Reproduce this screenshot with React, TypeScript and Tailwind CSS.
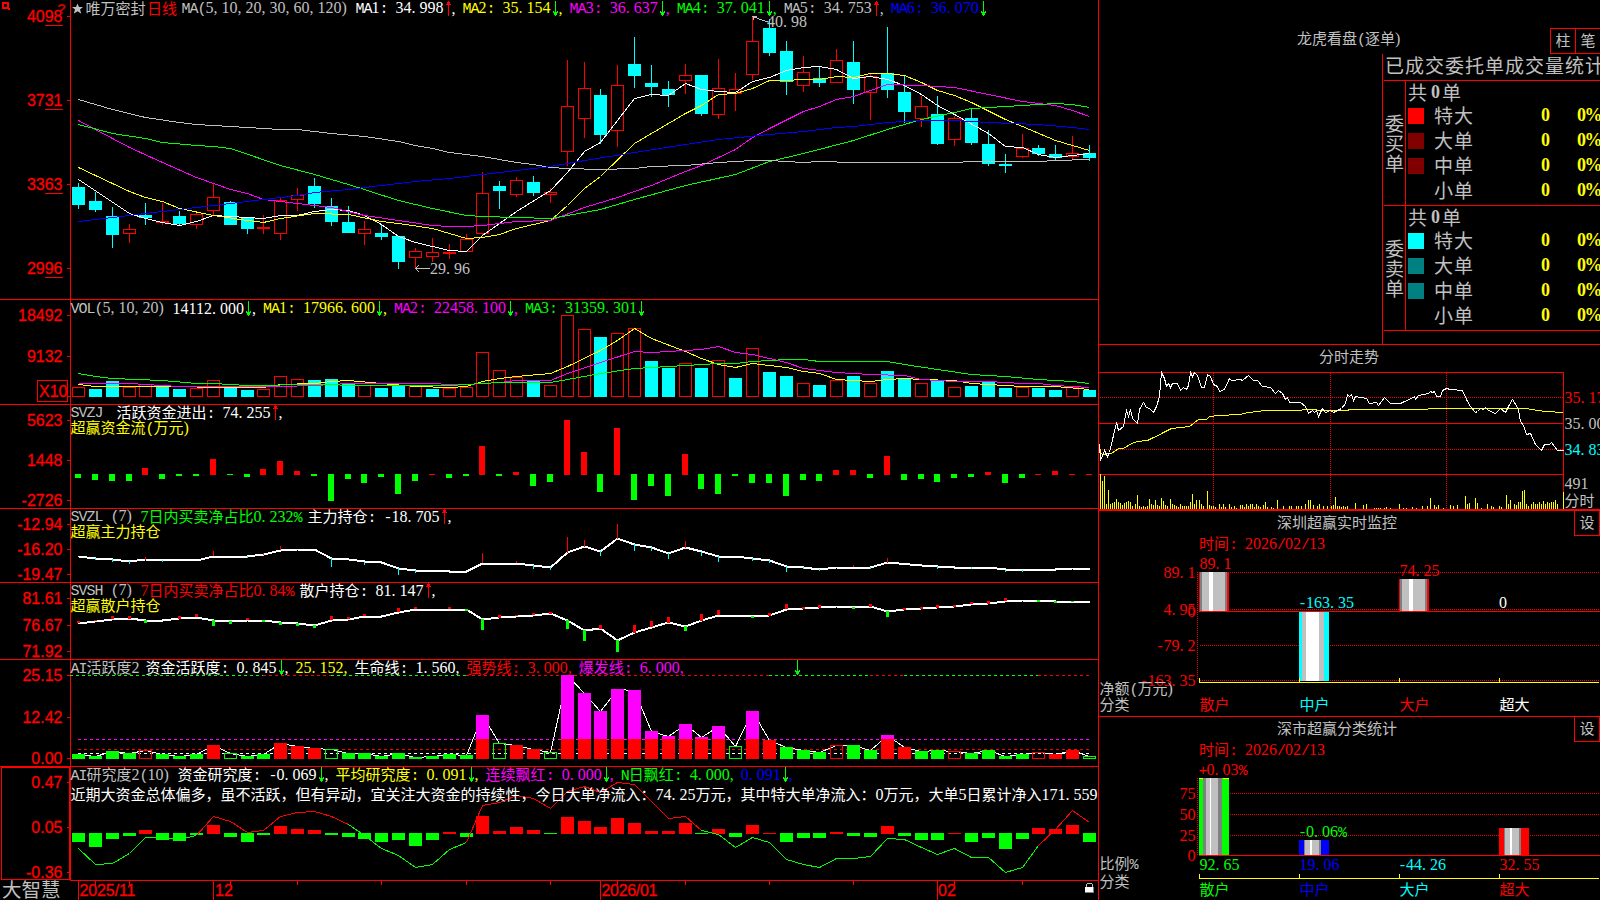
import React from 'react';
import clsx from 'clsx';

const cx = (i: number) => Math.round(78 + 16.85 * i);

/* ---------- text ---------- */

const runsOf = (s: string) => s.match(/[\u2e80-\uffff]+|[0-9]+|[,.]|\)|[^\u2e80-\uffff0-9,.)]+/g) ?? [];
const runClass = (r: string) => {
  if (/[\u2e80-\uffff]/.test(r)) return "font-['Noto_Sans_CJK_SC',sans-serif] text-[15px]";
  if (/[0-9]/.test(r)) return "font-['Liberation_Serif',serif] text-[16px]";
  if (/[,.]/.test(r)) return "font-['Liberation_Serif',serif] text-[16px] tracking-[4px]";
  if (r === ')') return "font-['Liberation_Serif',serif] text-[16px] tracking-[2.67px]";
  return "font-['Liberation_Mono',monospace] text-[15px] tracking-[-1px]";
};

function Txt({ children, className }: { children: string; className?: string }) {
  return (
    <span className={clsx('whitespace-pre', className)}>
      {runsOf(children).map((r, k) => (
        <span key={k} className={runClass(r)}>{r}</span>
      ))}
    </span>
  );
}

/* Chart label; y is the vertical centre of the digits. */
function Label({ x, y, fill, end, children }: { x: number; y: number; fill: string; end?: boolean; children: string }) {
  return (
    <text x={x} y={y + 5} fill={fill} textAnchor={end ? 'end' : 'start'}>
      {runsOf(children).map((r, k) => (
        <tspan key={k} className={runClass(r)}>{r}</tspan>
      ))}
    </text>
  );
}

function Arrow({ up }: { up?: boolean }) {
  return (
    <svg width="8" height="15" viewBox="0 0 8 15" shapeRendering="crispEdges" className="shrink-0">
      {up ? (
        <path d="M4 0h1v15h-1zM3 2h3v1h-3zM2 3h5v1h-5zM3 1h3v1h-3z" fill="#f00" />
      ) : (
        <path d="M4 0h1v15h-1zM2 10h1v1h-1zM6 10h1v1h-1zM2 11h5v1h-5zM3 12h3v2h-3z" fill="#0f0" />
      )}
    </svg>
  );
}

function Item({ t, c, a }: { t: string; c: string; a?: 'up' | 'down' }) {
  return (
    <div className={clsx('flex items-center', c)}>
      <Txt>{t}</Txt>
      {a && <Arrow up={a === 'up'} />}
      <Txt>,</Txt>
    </div>
  );
}

/* ---------- data (pixel rows) ---------- */

type Candle = [number, number, number, number, 0 | 1];
const candles: Candle[] = [
  [183, 187, 205, 209, 0], [192, 201, 210, 212, 0], [207, 216, 235, 248, 0], [224, 229, 234, 243, 1],
  [203, 215, 218, 225, 0], [203, 221, 223, 225, 1], [211, 216, 224, 226, 0], [212, 214, 225, 229, 1],
  [183, 197, 211, 216, 1], [201, 202, 225, 225, 0], [217, 217, 229, 234, 0], [215, 227, 229, 234, 1],
  [198, 200, 234, 240, 1], [188, 195, 200, 211, 1], [178, 186, 204, 208, 0], [198, 206, 222, 226, 0],
  [206, 222, 233, 233, 0], [221, 229, 234, 245, 1], [224, 233, 237, 240, 0], [236, 236, 262, 269, 0],
  [248, 251, 258, 268, 1], [238, 252, 257, 262, 1], [244, 252, 253, 259, 1], [234, 239, 252, 252, 1],
  [172, 193, 234, 236, 1], [181, 186, 191, 209, 0], [177, 180, 195, 197, 1], [176, 182, 193, 196, 0],
  [188, 192, 195, 203, 1], [60, 106, 152, 166, 1], [62, 88, 119, 138, 1], [89, 95, 135, 144, 0],
  [65, 85, 131, 147, 1], [37, 64, 76, 88, 0], [65, 83, 87, 97, 0], [81, 89, 95, 107, 0],
  [64, 75, 81, 94, 1], [75, 75, 114, 116, 0], [59, 88, 115, 119, 1], [73, 89, 94, 111, 1],
  [16, 41, 75, 80, 1], [19, 28, 53, 56, 0], [41, 51, 82, 95, 0], [56, 72, 86, 92, 1],
  [67, 78, 83, 87, 0], [49, 60, 83, 83, 1], [41, 62, 90, 104, 0], [73, 76, 93, 120, 1],
  [27, 73, 90, 98, 0], [75, 92, 112, 123, 0], [96, 106, 119, 127, 1], [96, 114, 144, 145, 0],
  [116, 118, 140, 146, 1], [108, 118, 143, 145, 0], [130, 144, 164, 166, 0], [154, 164, 166, 173, 0],
  [134, 148, 157, 158, 1], [145, 148, 154, 156, 0], [145, 154, 158, 160, 0], [136, 153, 157, 160, 1],
  [145, 153, 158, 161, 0],
];

/* "index:value" series, values in thirds of a pixel below the base row. */
type Pt = [number, number];
const series = (s: string): Pt[] => s.split(' ').map((p) => p.split(':').map(Number) as Pt);
const fill = (pts: Pt[]): number[] => {
  const out: number[] = [];
  for (let k = 0; k < pts.length - 1; k++) {
    const [a, va] = pts[k];
    const [b, vb] = pts[k + 1];
    for (let i = a; i < b; i++) out[i] = va + ((vb - va) * (i - a)) / (b - a);
  }
  const last = pts[pts.length - 1];
  out[last[0]] = last[1];
  return out;
};

const maGray = series('0:298 2:328 4:353 6:367 7:373 9:379 12:388 13:389 15:400 17:409 19:424 20:436 21:445 22:457 24:469 26:487 27:494 28:502 29:506 31:507 33:505 34:499 36:497 38:488 40:482 41:482 43:486 44:484 46:487 52:487 53:485 57:484 58:482 60:478');
const maMagenta = series('0:361 1:387 2:416 3:442 5:487 7:532 9:568 10:579 11:598 13:610 15:622 17:646 19:661 21:676 22:680 23:680 24:676 26:664 28:660 30:622 32:592 34:556 36:514 37:495 39:448 40:412 41:386 43:335 44:318 45:298 46:288 47:270 48:254 50:256 52:262 54:283 56:303 58:317 59:331 60:348');
const maGreen = series('0:373 2:400 4:415 5:427 7:435 8:439 9:446 12:496 14:523 16:553 19:600 21:625 23:646 24:649 28:655 29:646 31:628 33:598 36:557 39:523 41:484 43:460 46:420 48:388 50:358 52:337 53:326 55:319 58:310 59:313 60:322');
const maYellow = series('0:502 2:550 3:574 4:592 5:604 6:625 8:646 10:661 11:667 12:655 14:640 16:643 18:664 19:671 21:686 23:715 24:712 25:704 26:686 28:661 29:616 30:566 31:530 33:430 36:340 37:315 38:284 39:279 40:265 41:241 44:238 45:228 46:232 47:220 48:220 49:227 50:248 51:272 52:287 53:307 55:358 56:379 58:421 60:452');
const maWhite = series('0:538 3:640 4:656 5:668 6:676 7:665 8:646 9:649 11:655 12:647 13:646 14:634 15:628 16:631 17:646 18:673 19:709 20:727 22:750 23:754 24:706 26:634 28:570 29:517 30:455 31:428 33:295 34:283 35:286 36:250 37:268 38:274 39:277 40:245 41:232 42:211 43:203 44:199 45:208 46:234 47:230 48:238 49:256 50:284 51:316 52:342 54:400 55:438 56:443 57:462 58:471 59:466 60:460');
const maBlue = series('0:664 2:652 4:640 7:622 9:610 11:598 13:586 14:577 16:569 18:556 20:545 22:535 24:523 26:512 28:498 30:482 33:457 36:433 38:418 41:403 43:394 45:383 46:379 48:368 50:362 52:360 54:367 57:373 59:382 60:388');

const volumes = 'R273 C279 C255 R274 R264 C270 C279 R276 R252 C272 C282 R279 R240 R250 C252 C249 C264 R268 C276 C268 R270 C279 R275 R274 R168 R222 R243 C256 R267 R57 R99 C123 R111 R96 C195 C216 R201 C216 R192 C246 R156 C228 C240 R261 C267 R252 C240 R261 C225 C248 R261 C255 R273 C270 C256 C276 R272 C276 C282 R272 C282'.split(' ');
const volYellow = series('0:264 1:270 4:270 6:271 8:274 9:273 11:273 12:266 14:262 15:256 16:253 18:262 20:270 22:274 23:270 24:256 25:246 26:240 28:232 29:210 31:163 32:132 33:97 34:127 36:166 37:186 38:205 39:214 40:202 42:214 43:226 44:232 45:250 47:256 48:250 49:247 50:250 52:254 53:261 56:271 58:272 60:280');
const volMagenta = series('0:262 3:263 5:269 6:271 12:271 14:268 16:262 20:263 23:266 25:258 26:254 28:253 29:232 31:199 33:166 34:169 37:160 38:151 39:169 40:175 42:198 43:216 45:228 47:235 49:238 50:250 52:256 54:257 56:263 57:262 58:268 60:275');
const volGreen = series('0:232 1:241 2:246 5:252 7:262 8:262 10:268 14:265 17:268 22:268 23:266 24:263 25:259 28:259 29:250 31:232 33:217 36:208 38:202 39:202 40:196 42:190 43:190 44:196 48:196 49:205 51:220 53:235 55:241 57:250 59:256 60:262');

const flow = 'g546 g552 g555 g555 r516 g549 g540 g540 r489 g537 g543 r519 r495 r525 g540 g615 g549 g561 g543 g594 g555 r534 g546 g540 r450 g540 r528 g570 g558 r372 r468 g588 r396 g612 g570 g600 r474 g579 g594 g540 g561 g561 g600 g552 g555 r522 r522 g546 r480 g552 g549 g558 g546 g543 r528 g561 g546 r534 r525 r534 r534'.split(' ');

const mainLine = series('0:155 1:160 2:163 3:168 4:164 7:167 8:154 10:154 11:149 12:136 13:132 14:132 15:160 16:162 17:170 18:172 19:190 20:195 22:198 23:198 24:174 26:174 27:181 28:187 29:143 30:125 31:139 32:101 33:118 34:127 35:145 36:128 37:140 38:153 39:154 41:166 42:184 43:186 44:192 45:186 47:186 48:173 50:180 51:184 52:186 54:187 55:194 58:194 59:191 60:191');
const mainUp = series('4:156 8:138 11:144 12:123 24:144 26:168 29:96 30:105 32:57 36:108 46:179 48:159');
const mainDown = series('1:164 2:170 3:177 5:170 10:159 15:185 17:180 19:210 20:203 27:192 28:195 31:153 33:138 34:137 35:162 37:152 38:171 40:168 41:174 42:201 43:192 44:197 47:192 51:192 53:192 55:201 56:201');
const retailLine = series('0:354 1:349 2:343 3:341 4:346 5:346 6:341 7:336 8:346 9:349 10:346 11:346 12:352 13:355 14:360 15:346 16:343 17:334 18:333 19:322 20:312 23:312 24:343 25:338 26:334 27:331 28:326 29:345 30:375 31:371 32:405 33:383 34:367 35:353 36:364 37:347 38:330 39:330 40:333 41:332 42:313 43:311 44:308 45:305 47:305 48:318 49:314 50:311 51:308 52:305 53:298 54:296 55:289 56:287 57:285 58:288 60:288');
const retailUp = series('0:348 1:345 2:334 3:333 6:333 7:327 10:339 15:333 16:336 17:327 19:309 20:306 22:306 25:330 26:331 27:324 28:320 31:360 33:360 34:348 35:336 37:327 38:315 41:323 42:297 43:306 44:299 47:297 49:309 50:306 51:300 52:300 53:291 54:288 55:279');
const retailDown = series('4:354 8:363 9:357 11:351 12:360 13:363 14:369 23:318 24:375 29:372 30:408 32:441 36:378 40:339 46:311 48:336 57:291 58:293 59:291');

const active = 'g297 g303 g288 g294 R285 g297 g303 g297 r270 G294 g303 g297 r264 r273 r279 G283 g294 g294 g303 g294 g306 g303 g297 g300 m180 G265 r270 r282 G291 m60 m114 m168 m102 m105 m228 m243 m207 m246 m213 G273 m168 r255 g276 g285 g291 R270 g270 g285 m240 r276 g288 g285 R289 g294 g285 g303 g297 R292 r297 r285 G303'.split(' ');
const research = 'g561 g576 g552 g543 r525 g555 g558 g540 r510 g546 g561 g540 r513 r522 r525 g540 g546 g552 g561 g555 g573 g555 r531 g546 r483 r528 r516 r525 g537 r486 r498 r516 r489 r504 r528 r528 r504 g537 r522 g546 r510 r534 g561 g549 g549 r531 g543 g546 r513 g543 g555 g555 r534 g561 g549 g582 g552 r519 r522 r510 g561'.split(' ');
const researchLine = series('0:579 1:628 2:625 3:595 4:547 5:547 6:553 7:540 8:484 9:499 10:532 11:525 12:484 13:472 14:469 15:484 16:508 17:540 18:580 19:602 20:637 21:628 22:584 23:562 24:451 25:442 26:422 27:430 28:460 29:408 30:395 31:412 32:382 33:388 34:440 35:490 36:484 37:526 38:538 39:577 40:547 41:562 42:612 43:628 44:637 45:610 46:610 47:604 48:550 49:553 50:577 51:599 52:580 53:607 54:607 55:652 56:637 57:571 58:523 59:467 60:502');

const RED = '#ff0000';
const GREEN = '#00ff00';
const CYAN = '#00ffff';
const YELLOW = '#ffff00';
const MAGENTA = '#ff00ff';
const GRAY = '#c0c0c0';

/* ---------- left charts ---------- */

function Line({ pts, base, color, w = 1 }: { pts: Pt[]; base: number; color: string; w?: number }) {
  return (
    <polyline
      fill="none"
      stroke={color}
      strokeWidth={w}
      points={pts.map(([i, v]) => `${cx(i) + 0.5},${(base + Math.floor(v / 3) + 0.5).toFixed(1)}`).join(' ')}
    />
  );
}

function Axis({ ticks, underline }: { ticks: [string, number][]; underline?: boolean }) {
  return (
    <g fill={RED}>
      {ticks.map(([t, y]) => (
        <g key={t}>
          <text x={62.5} y={y + 6} textAnchor="end" stroke={RED} strokeWidth={0.3} className="font-['Liberation_Sans',sans-serif] text-[16px]">{t}</text>
          <rect x={67} y={y} width={3} height={1} />
          {underline && <rect x={45} y={y + 9} width={18} height={1} />}
        </g>
      ))}
    </g>
  );
}

function Panel({
  top, height, ticks, underline, header, children, last,
}: {
  top: number; height: number; ticks: [string, number][]; underline?: boolean;
  header: React.ReactNode; children: React.ReactNode; last?: boolean;
}) {
  return (
    <section className={clsx('grid shrink-0', !last && 'border-b border-[#ff0000]')}>
      <svg
        className="col-start-1 row-start-1 block"
        width="1098"
        height={height}
        viewBox={`0 ${top} 1098 ${height}`}
        shapeRendering="crispEdges"
      >
        <rect x={70} y={top} width={1} height={height} fill={RED} />
        <Axis ticks={ticks} underline={underline} />
        {children}
      </svg>
      <div className="z-10 col-start-1 row-start-1 flex w-[1098px] flex-col items-start self-start pl-[70.5px] leading-[15px] text-[#c0c0c0]">
        {header}
      </div>
    </section>
  );
}

function PricePanel() {
  return (
    <Panel
      top={0}
      height={299}
      underline
      ticks={[['4098', 16], ['3731', 100], ['3363', 184], ['2996', 268]]}
      header={
        <div className="flex h-[16px] items-center gap-[3px]">
          <div className="mr-[3px] flex items-center">
            <svg width="15" height="15" viewBox="0 0 15 15">
              <path d="M6.500 2.500l1.500 3.500h4l-3 2.500 1.300 4.300-3.800-2.500-3.800 2.500L4 8.500 1 6h4z" fill={GRAY} />
            </svg>
            <Txt>唯万密封</Txt>
            <Txt className="pl-[1.500px] text-[#ff0000]">日线</Txt>
            <Txt className="pl-[4.500px]">MA(5,10,20,30,60,120)</Txt>
          </div>
          <Item t="MA1: 34.998" c="text-white" a="up" />
          <Item t="MA2: 35.154" c="text-[#ffff00]" a="down" />
          <Item t="MA3: 36.637" c="text-[#ff00ff]" a="down" />
          <Item t="MA4: 37.041" c="text-[#00ff00]" a="down" />
          <Item t="MA5: 34.753" c="text-[#c0c0c0]" a="up" />
          <div className="flex items-center text-[#0000ff]"><Txt>MA6: 36.070</Txt><Arrow /></div>
        </div>
      }
    >
      <path d="M3 3h5v5h-5zM8 9h2" fill="none" stroke={RED} strokeWidth="2" />
      <text x={57} y={14} fill="#d00000" className="font-['Liberation_Sans',sans-serif] text-[15px] font-bold">?</text>
      {candles.map(([h, t, b, l, up], i) => {
        const x = cx(i);
        return up ? (
          <g key={i} fill={RED}>
            <rect x={x} y={h} width={1} height={t - h} />
            <rect x={x} y={b} width={1} height={l - b} />
            <rect x={x - 5.5} y={t + 0.5} width={12} height={Math.max(b - t - 1, 0.5)} fill="none" stroke={RED} />
          </g>
        ) : (
          <g key={i} fill={CYAN}>
            <rect x={x} y={h} width={1} height={l - h} />
            <rect x={x - 6} y={t} width={13} height={b - t} />
          </g>
        );
      })}
      <Line pts={maWhite} base={0} color="#fff" />
      <Line pts={maYellow} base={0} color={YELLOW} />
      <Line pts={maMagenta} base={0} color={MAGENTA} />
      <Line pts={maGreen} base={0} color={GREEN} />
      <Line pts={maGray} base={0} color={GRAY} />
      <Line pts={maBlue} base={0} color="#0000ff" />
      <path d="M415.500 268.500h14M419 265l-3.500 3.500 3.500 3.500" stroke={GRAY} fill="none" />
      <Label x={430} y={269} fill={GRAY}>29.96</Label>
      <path d="M752.500 16.500l15 5.500M753 16v4M753 16.500h4" stroke={GRAY} fill="none" />
      <Label x={767} y={22} fill={GRAY}>40.98</Label>
    </Panel>
  );
}

function VolumePanel() {
  return (
    <Panel
      top={300}
      height={104}
      ticks={[['18492', 315], ['9132', 356]]}
      header={
        <div className="flex h-[16px] items-center gap-[3px] pt-px">
          <Txt className="mr-[3px]">VOL(5,10,20)</Txt>
          <Item t="14112.000" c="text-white" a="down" />
          <Item t="MA1: 17966.600" c="text-[#ffff00]" a="down" />
          <Item t="MA2: 22458.100" c="text-[#ff00ff]" a="down" />
          <div className="flex items-center text-[#00ff00]"><Txt>MA3: 31359.301</Txt><Arrow /></div>
        </div>
      }
    >
      <rect x={37.5} y={380.5} width={30} height={21} fill="none" stroke={RED} />
      <text x={39} y={397} fill={RED} stroke={RED} strokeWidth={0.3} className="font-['Liberation_Sans',sans-serif] text-[16px]">X10</text>
      <rect x={67} y={396} width={3} height={1} fill={RED} />
      {volumes.map((v, i) => {
        const x = cx(i);
        const y = 296 + Math.round(Number(v.slice(1)) / 3);
        return v[0] === 'R' ? (
          <rect key={i} x={x - 5.5} y={y + 0.5} width={12} height={396 - y} fill="none" stroke={RED} />
        ) : (
          <rect key={i} x={x - 6} y={y} width={13} height={397 - y} fill={CYAN} />
        );
      })}
      <Line pts={volYellow} base={296} color={YELLOW} />
      <Line pts={volMagenta} base={296} color={MAGENTA} />
      <Line pts={volGreen} base={296} color={GREEN} />
    </Panel>
  );
}

function FlowPanel() {
  return (
    <Panel
      top={405}
      height={103}
      ticks={[['5623', 420], ['1448', 460], ['-2726', 500]]}
      header={
        <>
          <div className="flex h-[15px] items-center gap-[6px]">
            <Txt>{'SVZJ '}</Txt>
            <Item t="活跃资金进出: 74.255" c="text-white" a="up" />
          </div>
          <Txt className="-mt-px h-[15px] text-[#ffff00]">超赢资金流(万元)</Txt>
        </>
      }
    >
      {flow.map((v, i) => {
        const y = 296 + Number(v.slice(1)) / 3;
        return v[0] === 'r' ? (
          <rect key={i} x={cx(i) - 3} y={y} width={6} height={475 - y} fill={RED} />
        ) : (
          <rect key={i} x={cx(i) - 3} y={474} width={6} height={y - 474} fill={GREEN} />
        );
      })}
    </Panel>
  );
}

function Spikes({ line, pts, color, w, base }: { line: number[]; pts: Pt[]; color: string; w: number; base: number }) {
  return (
    <g fill={color}>
      {pts.map(([i, v]) => {
        const a = Math.round(line[i] / 3);
        const b = Math.round(v / 3);
        return (
          <rect
            key={i}
            x={cx(i) - Math.floor(w / 2)}
            y={base + Math.min(a, b)}
            width={w}
            height={Math.max(Math.abs(a - b), 1)}
          />
        );
      })}
    </g>
  );
}

function MainHoldPanel() {
  const l = fill(mainLine);
  return (
    <Panel
      top={509}
      height={73}
      ticks={[['-12.94', 524], ['-16.20', 549], ['-19.47', 574]]}
      header={
        <>
          <div className="flex h-[15px] items-center gap-[6px]">
            <Txt>SVZL (7)</Txt>
            <Txt className="text-[#00ff00]">7日内买卖净占比0.232%</Txt>
            <Item t="主力持仓: -18.705" c="text-white" a="up" />
          </div>
          <Txt className="-mt-px h-[15px] text-[#ffff00]">超赢主力持仓</Txt>
        </>
      }
    >
      <Line pts={mainLine} base={505} color="#fff" w={2} />
      <Spikes line={l} pts={mainUp} color={RED} w={1} base={505} />
      <Spikes line={l} pts={mainDown} color={CYAN} w={1} base={505} />
    </Panel>
  );
}

function RetailHoldPanel() {
  const l = fill(retailLine);
  return (
    <Panel
      top={583}
      height={76}
      ticks={[['81.61', 598], ['76.67', 625], ['71.92', 651]]}
      header={
        <>
          <div className="flex h-[15px] items-center gap-[6px]">
            <Txt>SVSH (7)</Txt>
            <Txt className="text-[#ff0000]">7日内买卖净占比0.84%</Txt>
            <Item t="散户持仓: 81.147" c="text-white" a="up" />
          </div>
          <Txt className="-mt-px h-[15px] text-[#ffff00]">超赢散户持仓</Txt>
        </>
      }
    >
      <Line pts={retailLine} base={505} color="#fff" w={2} />
      <Spikes line={l} pts={retailUp} color={RED} w={3} base={505} />
      <Spikes line={l} pts={retailDown} color={GREEN} w={3} base={505} />
    </Panel>
  );
}

const trend: [number, number, string][] = [
  [70, cx(11), GREEN], [cx(11), cx(15), RED], [cx(15), cx(23), GREEN], [cx(23), cx(41), RED],
  [cx(41), cx(47), GREEN], [cx(47), cx(49), RED], [cx(49), cx(57), GREEN], [cx(57), cx(60), RED],
];

function ActivityPanel() {
  const tops: Pt[] = active.map((v, i) => [i, Number(v.slice(1))]);
  return (
    <Panel
      top={660}
      height={106}
      ticks={[['25.15', 675], ['12.42', 717], ['0.00', 758]]}
      header={
        <div className="flex h-[15px] items-center gap-[3px]">
          <Txt className="mr-[3px]">AI活跃度2</Txt>
          <Item t="资金活跃度: 0.845" c="text-white" a="down" />
          <Item t="25.152" c="text-[#ffff00]" />
          <Item t="生命线: 1.560" c="text-white" />
          <Item t="强势线: 3.000" c="text-[#ff0000]" />
          <Item t="爆发线: 6.000" c="text-[#ff00ff]" />
          <div className="pl-[102px]"><Arrow /></div>
        </div>
      }
    >
      {trend.map(([a, b, c]) => (
        <path key={a} d={`M${a} 675.500H${b}`} stroke={c} strokeDasharray="3 3" />
      ))}
      <path d="M78 739.500H1089" stroke={MAGENTA} strokeDasharray="3 3" />
      <path d="M78 749.500H1089" stroke={RED} strokeDasharray="3 3" />
      <path d="M78 753.500H1089" stroke="#fff" strokeDasharray="3 3" />
      <Line pts={tops} base={655} color="#fff" />
      {active.map((v, i) => {
        const x = cx(i);
        const k = v[0];
        const y = 655 + Math.round(Number(v.slice(1)) / 3);
        if (k === 'R' || k === 'G')
          return <rect key={i} x={x - 5.5} y={y + 0.5} width={12} height={758 - y} fill="none" stroke={k === 'R' ? RED : GREEN} />;
        return (
          <g key={i}>
            <rect x={x - 6} y={y} width={13} height={759 - y} fill={k === 'g' ? GREEN : k === 'r' ? RED : MAGENTA} />
            {k === 'm' && <rect x={x - 6} y={739} width={13} height={20} fill={RED} />}
          </g>
        );
      })}
    </Panel>
  );
}

const researchParts: [number, number, string][] = [
  [0, 7, GREEN], [7, 16, RED], [16, 23, GREEN], [23, 37, RED], [37, 57, GREEN], [57, 60, RED],
];

function ResearchPanel() {
  return (
    <Panel
      top={767}
      height={113}
      last
      ticks={[['0.47', 782], ['0.05', 827], ['-0.36', 872]]}
      header={
        <>
          <div className="flex h-[15px] items-center gap-[3px]">
            <Txt className="mr-[3px]">AI研究度2(10)</Txt>
            <Item t="资金研究度: -0.069" c="text-white" a="down" />
            <Item t="平均研究度: 0.091" c="text-[#ffff00]" a="down" />
            <Item t="连续飘红: 0.000" c="text-[#ff00ff]" a="down" />
            <Item t="N日飘红: 4.000" c="text-[#00ff00]" />
            <Item t="0.091" c="text-[#0000ff]" a="down" />
          </div>
          <Txt className="mt-[4px] h-[15px] text-white">
            近期大资金总体偏多，虽不活跃，但有异动，宜关注大资金的持续性，今日大单净流入：74.25万元，其中特大单净流入：0万元，大单5日累计净入171.559
          </Txt>
        </>
      }
    >
      <rect x={1.500} y={767.5} width={68} height={112} fill="none" stroke={RED} />
      {research.map((v, i) => {
        const y = 655 + Number(v.slice(1)) / 3;
        return v[0] === 'r' ? (
          <rect key={i} x={cx(i) - 6} y={y} width={13} height={834 - y} fill={RED} />
        ) : (
          <rect key={i} x={cx(i) - 6} y={833} width={13} height={y - 833} fill={GREEN} />
        );
      })}
      {researchParts.map(([a, b, c]) => (
        <Line key={a} pts={researchLine.slice(a, b + 1)} base={655} color={c} />
      ))}
    </Panel>
  );
}

function TimeAxis() {
  return (
    <footer className="grid shrink-0">
      <svg className="col-start-1 row-start-1 block" width="1098" height="20" viewBox="0 880 1098 20" shapeRendering="crispEdges">
        <rect x={70} y={880} width={1028} height={1} fill={RED} />
        <g fill={RED}>
          {[0, 8, 31, 51].map((i) => <rect key={i} x={cx(i)} y={880} width={1} height={20} />)}
          {[1, 3, 9, 13, 18, 23, 28, 32, 36, 41, 46, 52, 56].map((i) => (
            <rect key={i} x={cx(i)} y={880} width={1} height={5} />
          ))}
        </g>
        <g fill={RED} stroke={RED} strokeWidth={0.3} className="font-['Liberation_Sans',sans-serif] text-[16px]">
          <text x={79.5} y={896} textLength={56}>2025/11</text>
          <text x={cx(8) + 2} y={896}>12</text>
          <text x={cx(31) + 1.5} y={896} textLength={56}>2026/01</text>
          <text x={cx(51) + 1} y={896}>02</text>
        </g>
        <path d="M1086.500 887v-2q0-2 3-2t3 2v2" fill="none" stroke={GRAY} />
        <rect x={1085} y={887} width={9} height={6} fill="#808080" />
        <rect x={1085} y={887} width={8} height={5} fill="#fff" />
      </svg>
      <span className="col-start-1 row-start-1 pl-[2px] font-['Noto_Sans_CJK_SC',sans-serif] text-[19.500px] leading-[17px] text-[#c0c0c0]">
        大智慧
      </span>
    </footer>
  );
}

/* ---------- right column ---------- */

const cjk20 = "font-['Noto_Sans_CJK_SC',sans-serif] text-[19px] tracking-[1px]";

function OrderBlock({ side, colors }: { side: string[]; colors: string[] }) {
  return (
    <div className="flex h-[125px] border-t border-[#ff0000]">
      <div className={clsx('flex w-[21px] flex-col items-start justify-center pl-px leading-[20px]', cjk20)}>
        {side.map((c, i) => <span key={i} className="leading-[20px]">{c}</span>)}
      </div>
      <div className="flex flex-1 flex-col border-l border-[#ff0000]">
        <div className={clsx('flex h-[22px] items-center pl-[2px]', cjk20)}>
          <span>共</span>
          <span className="w-[14px] pl-[3px] font-['Liberation_Serif',serif] text-[18px] font-bold">0</span>
          <span>单</span>
        </div>
        {['特大', '大单', '中单', '小单'].map((t, i) => (
          <div key={t} className="flex h-[25px] items-center pl-[2px]">
            <span className="size-[16px]" style={{ backgroundColor: colors[i] ?? 'transparent' }} />
            <span className={clsx('ml-[10px] w-[107px]', cjk20)}>{t}</span>
            <span className="w-[36px] font-['Liberation_Serif',serif] text-[18px] font-bold text-[#ffff00]">0</span>
            <span className="font-['Liberation_Serif',serif] text-[18px] font-bold tracking-[-1.500px] text-[#ffff00]">0%</span>
          </div>
        ))}
      </div>
    </div>
  );
}

function OrdersPanel() {
  return (
    <section className="flex h-[345px] flex-col border-b border-[#ff0000]">
      <div className="flex h-[54px] items-end">
        <h2 className="flex-1 pb-[5px] pl-[198px] text-[15px] leading-[16px] text-[#c0c0c0]"><Txt>龙虎看盘(逐单)</Txt></h2>
        <div className="flex h-[26px] w-[50px] border-y border-[#ff0000] text-[#c0c0c0]">
          {['柱', '笔'].map((t) => (
            <button key={t} className="flex w-[25px] items-center justify-center border-l border-[#ff0000] pb-[2px] leading-[15px]">
              <Txt>{t}</Txt>
            </button>
          ))}
        </div>
      </div>
      <div className="ml-[283px] flex flex-1 flex-col overflow-hidden border-l border-[#ff0000] pl-px text-[#c0c0c0]">
        <h3 className={clsx('h-[26px] pl-px leading-[22px] whitespace-nowrap', cjk20)}>
          <span className="leading-[22px]">已成交委托单成交量统计</span>
        </h3>
        <OrderBlock side={['委', '买', '单']} colors={['#ff0000', '#800000', '#800000']} />
        <OrderBlock side={['委', '卖', '单']} colors={['#00ffff', '#008080', '#008080']} />
        <div className="border-t border-[#ff0000]" />
      </div>
    </section>
  );
}

const price = '12,312 17,360 27,332 36,348 44,338 54,285 65,247 71,272 84,258 95,211 101,228 106,208 113,235 127,250 133,207 145,188 155,203 164,206 176,216 184,200 193,170 199,97 207,115 214,140 219,130 226,142 232,130 247,130 257,150 265,142 275,147 281,135 287,97 292,108 297,97 308,107 319,142 328,142 338,103 347,110 355,132 366,140 373,153 388,148 403,116 410,122 436,118 443,121 461,106 475,121 487,121 502,139 526,142 541,160 549,150 561,160 570,178 578,173 583,187 617,188 632,200 641,219 651,210 658,216 664,212 671,229 683,205 690,218 707,212 716,216 728,210 740,204 752,190 756,163 763,168 768,164 775,180 782,170 815,174 822,190 844,188 850,196 869,173 886,189 917,189 928,184 943,178 958,170 962,178 970,165 1000,160 1007,154 1013,158 1019,154 1025,168 1037,168 1043,150 1054,144 1065,149 1102,151 1113,177 1126,199 1142,217 1148,214 1157,204 1165,208 1172,203 1180,212 1201,220 1216,205 1232,217 1240,199 1252,179 1259,188 1271,207 1277,243 1285,256 1295,283 1306,279 1322,314 1339,330 1347,313 1364,312 1370,307 1388,331 1404,331';
const average = '12,312 16,337 22,344 48,339 70,326 85,325 110,310 127,304 157,300 175,291 190,287 205,276 230,266 283,259 310,239 333,238 343,230 370,227 432,223 460,218 510,212 600,211 640,208 690,212 755,211 765,208 990,208 1005,205 1100,204 1190,204 1240,206 1290,206 1330,210 1350,214 1404,217';
const ticksVol = '15:403 22:423 28:410 34:492 40:450 46:492 52:490 58:488 64:477 70:488 76:490 82:495 88:489 95:486 101:483 107:486 113:498 120:492 127:465 133:500 139:501 145:500 151:502 157:500 163:477 169:492 175:497 181:480 187:497 193:498 199:476 205:483 211:497 217:500 226:477 232:494 238:497 244:500 250:502 256:492 262:500 268:500 274:498 280:500 286:486 292:462 298:492 305:480 313:480 319:492 325:500 337:453 343:497 349:500 355:498 361:502 373:492 379:502 385:492 390:502 403:492 409:502 418:500 424:504 436:495 442:495 448:503 454:492 460:500 466:492 472:494 478:503 484:492 490:500 496:503 505:497 511:486 517:503 529:502 535:504 547:480 565:498 583:500 590:500 604:498 610:500 620:500 632:492 640:480 646:480 655:497 668:500 674:492 686:500 698:498 709:500 715:497 721:471 727:500 733:498 740:502 745:500 751:503 757:500 782:489 806:497 814:494 838:504 844:504 850:504 856:504 868:504 874:503 886:504 913:492 925:504 934:504 952:503 965:504 983:500 996:500 1006:474 1018:497 1024:502 1030:497 1045:504 1066:495 1075:500 1087:497 1111:468 1117:492 1123:489 1141:474 1147:489 1160:504 1177:492 1190:500 1196:502 1213:500 1219:502 1234:465 1240:492 1246:480 1258:492 1264:497 1270:486 1276:486 1282:453 1288:450 1294:492 1300:498 1309:494 1315:486 1321:492 1327:492 1333:486 1339:492 1345:483 1351:492 1357:486 1363:490 1369:486 1375:486 1381:480 1387:494 1404:456';
const trace = (s: string) =>
  s.split(' ').map((p) => {
    const [x, y] = p.split(',').map(Number);
    return `${1095 + Math.floor(x / 3) + 0.5},${340 + Math.floor(y / 3) + 0.5}`;
  }).join(' ');

function IntradayPanel() {
  return (
    <section className="grid h-[164px]">
      <svg className="col-start-1 row-start-1 block" width="501" height="164" viewBox="1099 345 501 164" shapeRendering="crispEdges">
        <g stroke={RED} fill="none">
          <path d="M1099 372.500H1563.500V509M1099 423.500H1563M1099 474.500H1563" />
          <path d="M1100 397.500H1563M1100 449.500H1563M1213.500 373V508M1330.500 373V508M1446.500 373V508" strokeDasharray="1 1" />
        </g>
        <g fill={YELLOW}>
          {series(ticksVol).map(([x, t]) => (
            <rect key={x} x={1095 + Math.floor(x / 3)} y={340 + Math.floor(t / 3)} width={1} height={169 - Math.floor(t / 3)} />
          ))}
        </g>
        <polyline points={trace(average)} fill="none" stroke={YELLOW} />
        <polyline points={trace(price)} fill="none" stroke="#fff" />
        <Label x={1564.5} y={398} fill={RED}>35.17</Label>
        <Label x={1564.5} y={424} fill={GRAY}>35.00</Label>
        <Label x={1564.5} y={450} fill={CYAN}>34.83</Label>
        <Label x={1564.5} y={484} fill={GRAY}>491</Label>
        <Label x={1564.5} y={501} fill={GRAY}>分时</Label>
      </svg>
      <h2 className="col-start-1 row-start-1 self-start pt-[3px] pl-[220px] text-[15px] leading-[16px] text-[#c0c0c0]"><Txt>分时走势</Txt></h2>
    </section>
  );
}

type Stripe = [number, number, string];
function Cylinder({ x, y, h, stripes }: { x: number; y: number; h: number; stripes: Stripe[] }) {
  return (
    <g>
      {stripes.map(([a, w, c], k) => <rect key={k} x={x + a} y={y} width={w} height={h} fill={c} />)}
    </g>
  );
}
const redTube: Stripe[] = [[0, 30, RED], [1, 2, '#808080'], [3, 23, GRAY], [10, 4, '#fff'], [26, 2, '#808080']];
const cyanTube: Stripe[] = [[0, 30, CYAN], [3, 22, GRAY], [7, 13, '#fff']];
const greenTube: Stripe[] = [[0, 30, GREEN], [4, 19, '#808080'], [7, 12, GRAY], [11, 1, '#fff']];
const thinTube = (c: string): Stripe[] => [[0, 30, c], [5, 17, '#808080'], [6, 14, GRAY], [11, 2, '#fff']];

function CategoryPanel({ title, top, height, children }: { title: string; top: number; height: number; children: React.ReactNode }) {
  return (
    <section className="grid border-t border-[#ff0000]">
      <svg
        className="col-start-1 row-start-1 block"
        width="501"
        height={height}
        viewBox={`1099 ${top} 501 ${height}`}
        shapeRendering="crispEdges"
      >
        {children}
      </svg>
      <header className="col-start-1 row-start-1 flex items-start self-start text-[#c0c0c0]">
        <div className="flex flex-1 flex-col">
          <h2 className="pt-[3px] pl-[178px] text-[15px] leading-[16px]"><Txt>{title}</Txt></h2>
          <div className="pt-[5px] pl-[100px] leading-[15px] text-[#ff0000]"><Txt>时间: 2026/02/13</Txt></div>
        </div>
        <button className="flex h-[25px] w-[26px] items-center justify-center border-x border-b border-[#ff0000] pb-[2px] leading-[15px]">
          <Txt>设</Txt>
        </button>
      </header>
    </section>
  );
}

function MonitorPanel() {
  return (
    <CategoryPanel title="深圳超赢实时监控" top={511} height={205}>
      <g stroke={RED} fill="none">
        <path d="M1200 572.500H1600M1200 609.500H1600M1200 645.500H1600M1200 680.500H1600M1197.500 572V680" strokeDasharray="1 1" />
        <path d="M1199 611.500H1600" />
      </g>
      <Cylinder x={1199} y={572} h={39} stripes={redTube} />
      <Cylinder x={1299} y={612} h={69} stripes={cyanTube} />
      <Cylinder x={1399} y={579} h={32} stripes={redTube} />
      <path d="M1199 682.500H1599M1199.500 678v4M1299.500 678v4M1399.500 678v4M1499.500 678v4" stroke={YELLOW} />
      <Label x={1199.5} y={564} fill={RED}>89.1</Label>
      <Label x={1298} y={603} fill={CYAN}>-163.35</Label>
      <Label x={1399.5} y={571} fill={RED}>74.25</Label>
      <Label x={1499} y={603} fill="#fff">0</Label>
      <Label x={1195.5} y={573} fill={RED} end>89.1</Label>
      <Label x={1195.5} y={610} fill={RED} end>4.95</Label>
      <Label x={1195.5} y={612} fill={RED} end>0</Label>
      <Label x={1195.5} y={646} fill={RED} end>-79.2</Label>
      <Label x={1195.5} y={681} fill={RED} end>-163.35</Label>
      <Label x={1099.5} y={688.5} fill={GRAY}>净额(万元)</Label>
      <Label x={1099.5} y={704.5} fill={GRAY}>分类</Label>
      <Label x={1199.5} y={704.5} fill={RED}>散户</Label>
      <Label x={1299.5} y={704.5} fill={CYAN}>中户</Label>
      <Label x={1399.5} y={704.5} fill={RED}>大户</Label>
      <Label x={1499.5} y={704.5} fill="#fff">超大</Label>
    </CategoryPanel>
  );
}

function StatsPanel() {
  return (
    <CategoryPanel title="深市超赢分类统计" top={717} height={183}>
      <g stroke={RED} fill="none">
        <path d="M1200 793.500H1600M1200 814.500H1600M1200 835.500H1600M1197.500 778V855" strokeDasharray="1 1" />
        <path d="M1199 855.500H1600" />
      </g>
      <Cylinder x={1199} y={778} h={77} stripes={greenTube} />
      <rect x={1199} y={778} width={4} height={1} fill={YELLOW} />
      <rect x={1223} y={778} width={6} height={1} fill={YELLOW} />
      <Cylinder x={1299} y={840} h={15} stripes={thinTube('#0000ff')} />
      <Cylinder x={1499} y={828} h={27} stripes={thinTube(RED)} />
      <path d="M1199 878.500H1599M1199.500 874v4M1299.500 874v4M1399.500 874v4M1499.500 874v4" stroke={YELLOW} />
      <Label x={1198.5} y={770} fill={RED}>+0.03%</Label>
      <Label x={1298} y={831.5} fill={GREEN}>-0.06%</Label>
      <Label x={1195.5} y={794} fill={RED} end>75</Label>
      <Label x={1195.5} y={815} fill={RED} end>50</Label>
      <Label x={1195.5} y={836} fill={RED} end>25</Label>
      <Label x={1195.5} y={856} fill={RED} end>0</Label>
      <Label x={1199.5} y={865} fill={GREEN}>92.65</Label>
      <Label x={1299.5} y={865} fill="#0000ff">19.06</Label>
      <Label x={1398} y={865} fill={CYAN}>-44.26</Label>
      <Label x={1499.5} y={865} fill={RED}>32.55</Label>
      <Label x={1099.5} y={864} fill={GRAY}>比例%</Label>
      <Label x={1099.5} y={881.5} fill={GRAY}>分类</Label>
      <Label x={1199.5} y={890} fill={GREEN}>散户</Label>
      <Label x={1299.5} y={890} fill="#0000ff">中户</Label>
      <Label x={1399.5} y={890} fill={CYAN}>大户</Label>
      <Label x={1499.5} y={890} fill={RED}>超大</Label>
    </CategoryPanel>
  );
}

export default function App() {
  return (
    <main className="flex h-[900px] w-[1600px] overflow-hidden bg-black">
      <div className="flex w-[1099px] shrink-0 flex-col border-r border-[#ff0000]">
        <PricePanel />
        <VolumePanel />
        <FlowPanel />
        <MainHoldPanel />
        <RetailHoldPanel />
        <ActivityPanel />
        <ResearchPanel />
        <TimeAxis />
      </div>
      <div className="flex w-[501px] flex-col">
        <OrdersPanel />
        <IntradayPanel />
        <div className="border-t border-[#ff0000]" />
        <MonitorPanel />
        <StatsPanel />
      </div>
    </main>
  );
}
